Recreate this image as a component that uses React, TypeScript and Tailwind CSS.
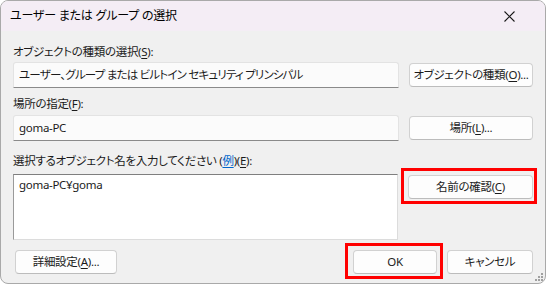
import React from 'react'

const font = "font-['Noto_Sans','Noto_Sans_CJK_JP',sans-serif] [font-feature-settings:'palt']"

// underlined access key, e.g. (S)
const Key = ({ k }: { k: string }) => (
  <>
    (<span className="underline underline-offset-2">{k}</span>)
  </>
)

const Btn = ({ children, className = '' }: { children: React.ReactNode; className?: string }) => (
  <div
    className={`flex h-[24px] items-center justify-center whitespace-nowrap rounded-[4px] border border-[#d1d1d1] border-b-[#bcbcbc] bg-[#fdfdfd] text-[11.5px] tracking-[-0.3px] text-[#1b1b1b] ${className}`}
  >
    {children}
  </div>
)

const Field = ({ children }: { children: React.ReactNode }) => (
  <div className="flex h-[26px] flex-1 items-center whitespace-nowrap rounded-t-[3px] border border-[#e3e3e3] border-b-[#8a8a8a] bg-[#fbfbfb] pl-[5px] text-[11.5px] tracking-[-0.3px] text-[#1b1b1b]">
    {children}
  </div>
)

const Label = ({ children, className = '' }: { children: React.ReactNode; className?: string }) => (
  <div className={`h-[16px] whitespace-nowrap text-[11.5px] leading-[16px] tracking-[-0.3px] text-[#1b1b1b] ${className}`}>
    {children}
  </div>
)

export default function App() {
  return (
    <div className={`h-[286px] w-[547px] bg-white ${font}`}>
      <div className="relative flex h-[284px] w-[546px] flex-col overflow-hidden rounded-[8px] border border-[#a9a9a9] bg-[#f0f0f0]">
        {/* title bar */}
        <div className="flex h-[30px] items-center justify-between bg-[#f4edf5] pl-[9px] pr-[30px]">
          <span className="text-[12px] tracking-[-0.2px] text-black">ユーザー または グループ の選択</span>
          <svg width="11" height="11" viewBox="0 0 11 11">
            <path d="M0.5 0.5 L10.5 10.5 M10.5 0.5 L0.5 10.5" stroke="#1a1a1a" strokeWidth="1.1" fill="none" />
          </svg>
        </div>

        <div className="flex flex-col px-[12px] pt-[13px]">
          <Label>
            オブジェクトの種類の選択<Key k="S" />:
          </Label>
          <div className="mt-[2px] flex items-center gap-[10px]">
            <Field>
              <span className="tracking-[-0.8px]">ユーザー、グループ または ビルトイン セキュリティ プリンシパル</span>
            </Field>
            <Btn className="w-[124px]">
              オブジェクトの種類<Key k="O" />...
            </Btn>
          </div>

          <Label className="mt-[8px]">
            場所の指定<Key k="F" />:
          </Label>
          <div className="mt-[3px] flex items-center gap-[10px]">
            <Field>goma-PC</Field>
            <Btn className="w-[124px]">
              場所<Key k="L" />...
            </Btn>
          </div>

          <Label className="mt-[12px]">
            選択するオブジェクト名を入力してください (<span className="text-[#0066cc] underline underline-offset-2">例</span>)<Key k="E" />:
          </Label>
          <div className="mt-[5px] flex items-start gap-[10px]">
            <div className="h-[66px] flex-1 border border-[#dcdcdc] border-l-[#9a9a9a] border-t-[#7f7f7f] bg-white pl-[5px] pt-[1px] text-[11.5px] tracking-[-0.3px] text-[#1b1b1b]">
              goma-PC¥goma
            </div>
            <div className="relative mt-[1px]">
              <Btn className="w-[125px]">
                名前の確認<Key k="C" />
              </Btn>
              <span className="absolute -bottom-[5px] -left-[7px] -right-[4px] -top-[7px] border-[3px] border-[#ff0000]" />
            </div>
          </div>

          <div className="mt-[10px] flex items-center">
            <Btn className="ml-[2px] w-[102px]">
              詳細設定<Key k="A" />...
            </Btn>
            <div className="relative ml-auto">
              <Btn className="w-[84px]">OK</Btn>
              <span className="absolute -bottom-[5px] -left-[8px] -right-[6px] -top-[7px] border-[3px] border-[#ff0000]" />
            </div>
            <Btn className="ml-[10px] w-[86px]">キャンセル</Btn>
          </div>
        </div>

        {/* resize grip */}
        <svg className="absolute bottom-[1px] right-[1px]" width="10" height="10" viewBox="0 0 10 10">
          <g fill="#a0a0a0">
            <rect x="7" y="1" width="2" height="2" />
            <rect x="4" y="4" width="2" height="2" />
            <rect x="7" y="4" width="2" height="2" />
            <rect x="1" y="7" width="2" height="2" />
            <rect x="4" y="7" width="2" height="2" />
            <rect x="7" y="7" width="2" height="2" />
          </g>
        </svg>
      </div>
    </div>
  )
}
